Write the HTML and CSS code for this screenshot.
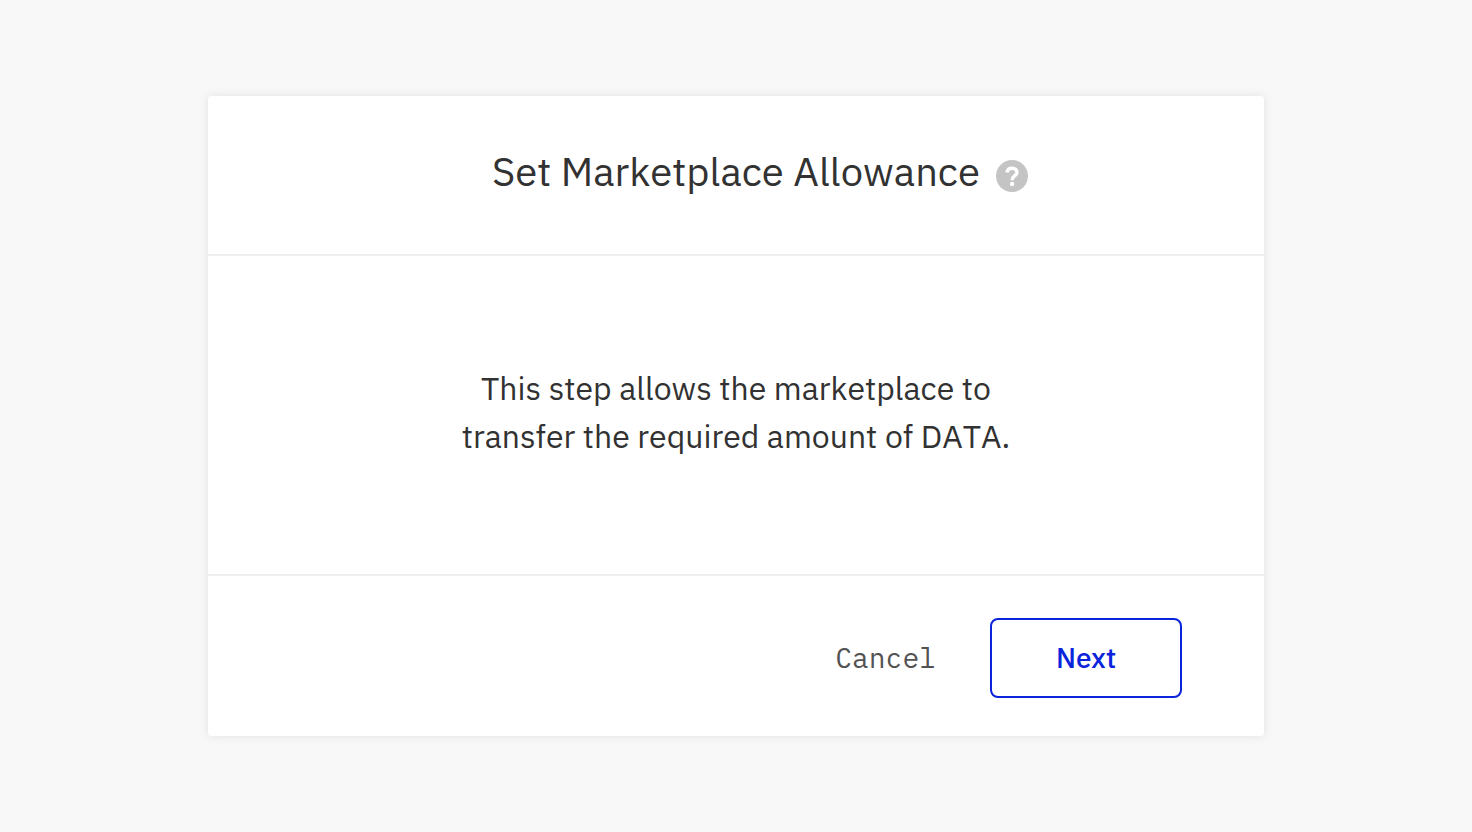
FILE: index.html
```html
<!DOCTYPE html>
<html lang="en">
<head>
<meta charset="utf-8">
<meta name="viewport" content="width=device-width, initial-scale=1">
<title>Set Marketplace Allowance</title>
<link rel="stylesheet" href="styles.css">
</head>
<body>
<main class="backdrop">
  <section class="dialog" role="dialog" aria-labelledby="dialog-title">
    <header class="dialog-header">
      <h1 class="dialog-title" id="dialog-title">Set Marketplace Allowance</h1>
      <button class="help" type="button" aria-label="Help">
        <svg class="help-icon" viewBox="0 0 32 32" aria-hidden="true">
          <circle cx="16" cy="16" r="16" fill="#c4c4c4"/>
          <path d="M11 12.500C11.300 9.700 13.300 8.200 16 8.200c3 0 5 1.700 5 4.200 0 3.400-4.900 3.300-4.900 7.800" fill="none" stroke="#fff" stroke-width="3.400"/>
          <circle cx="16.100" cy="24" r="2.200" fill="#fff"/>
        </svg>
      </button>
    </header>
    <div class="dialog-body">
      <p class="message">This step allows the marketplace to transfer the required amount of DATA.</p>
    </div>
    <footer class="dialog-footer">
      <button class="button button-cancel" type="button">Cancel</button>
      <button class="button button-next" type="button">Next</button>
    </footer>
  </section>
</main>
</body>
</html>
```
FILE: styles.css
```css
* {
  box-sizing: border-box;
}

body {
  margin: 0;
  background: #f8f8f8;
  color: #323232;
  font-family: "IBM Plex Sans", Roboto, "Noto Sans", sans-serif;
  font-kerning: none;
}

.backdrop {
  display: flex;
  align-items: center;
  justify-content: center;
  min-height: 100vh;
  padding: 32px;
}

.dialog {
  width: 100%;
  max-width: 1056px;
  border-radius: 4px;
  background: #fff;
  box-shadow: 0 0 10px rgba(0, 0, 0, 0.1);
}

.dialog-header {
  display: flex;
  align-items: center;
  justify-content: center;
  gap: 16px;
  padding: 46px 32px 54px 80px;
  border-bottom: 2px solid #efefef;
}

.dialog-title {
  margin: 0;
  font-size: 40px;
  font-weight: 400;
  line-height: 58px;
}

.help {
  display: flex;
  margin-top: 10px;
  padding: 0;
  border: 0;
  background: none;
}

.help-icon {
  width: 32px;
  height: 32px;
}

.dialog-body {
  display: flex;
  justify-content: center;
  padding: 108px 32px 114px;
  border-bottom: 2px solid #efefef;
}

.message {
  max-width: 600px;
  margin: 0;
  font-size: 32px;
  line-height: 48px;
  text-align: center;
}

.dialog-footer {
  display: flex;
  align-items: center;
  justify-content: flex-end;
  gap: 54px;
  padding: 42px 82px 38px 32px;
}

.button {
  background: none;
  font-size: 28px;
  line-height: 36px;
}

.button-cancel {
  padding: 0;
  border: 0;
  color: #525252;
  font-family: "IBM Plex Mono", "Liberation Mono", monospace;
}

.button-next {
  min-width: 192px;
  min-height: 80px;
  border: 2px solid #0a24dc;
  border-radius: 8px;
  color: #0a24dc;
  font-family: inherit;
  font-weight: 500;
}
```
